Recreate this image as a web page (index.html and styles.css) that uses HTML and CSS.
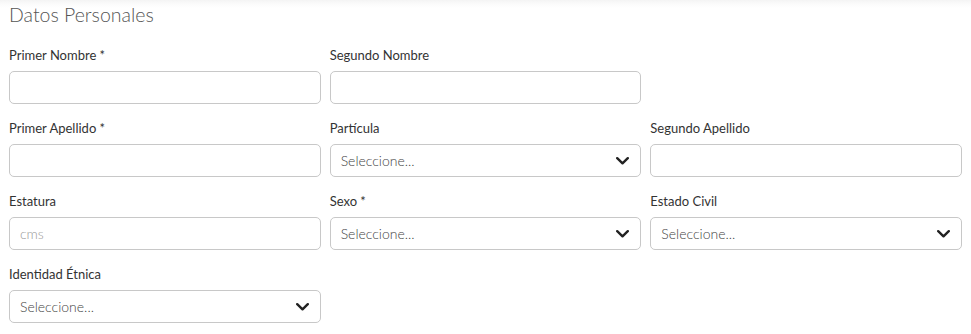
FILE: index.html
```html
<!DOCTYPE html>
<html lang="es">
<head>
<meta charset="utf-8">
<title>Datos Personales</title>
<link rel="stylesheet" href="styles.css">
</head>
<body>
<div class="page">
  <h2 class="title">Datos Personales</h2>
  <div class="grid">
    <div class="field">
      <label class="label">Primer Nombre *</label>
      <div class="input"></div>
    </div>
    <div class="field">
      <label class="label">Segundo Nombre</label>
      <div class="input"></div>
    </div>
    <div class="field empty"></div>

    <div class="field">
      <label class="label">Primer Apellido *</label>
      <div class="input"></div>
    </div>
    <div class="field">
      <label class="label">Partícula</label>
      <div class="input select"><span>Seleccione...</span><svg class="chev" width="13" height="8" viewBox="0 0 13 8"><polyline points="1.2,1.2 6.5,6.3 11.8,1.2" fill="none" stroke="#222" stroke-width="2.4" stroke-linecap="round" stroke-linejoin="round"/></svg></div>
    </div>
    <div class="field">
      <label class="label">Segundo Apellido</label>
      <div class="input"></div>
    </div>

    <div class="field">
      <label class="label">Estatura</label>
      <div class="input"><span class="ph">cms</span></div>
    </div>
    <div class="field">
      <label class="label">Sexo *</label>
      <div class="input select"><span>Seleccione...</span><svg class="chev" width="13" height="8" viewBox="0 0 13 8"><polyline points="1.2,1.2 6.5,6.3 11.8,1.2" fill="none" stroke="#222" stroke-width="2.4" stroke-linecap="round" stroke-linejoin="round"/></svg></div>
    </div>
    <div class="field">
      <label class="label">Estado Civil</label>
      <div class="input select"><span>Seleccione...</span><svg class="chev" width="13" height="8" viewBox="0 0 13 8"><polyline points="1.2,1.2 6.5,6.3 11.8,1.2" fill="none" stroke="#222" stroke-width="2.4" stroke-linecap="round" stroke-linejoin="round"/></svg></div>
    </div>

    <div class="field">
      <label class="label">Identidad Étnica</label>
      <div class="input select"><span>Seleccione...</span><svg class="chev" width="13" height="8" viewBox="0 0 13 8"><polyline points="1.2,1.2 6.5,6.3 11.8,1.2" fill="none" stroke="#222" stroke-width="2.4" stroke-linecap="round" stroke-linejoin="round"/></svg></div>
    </div>
  </div>
</div>
</body>
</html>
```
FILE: styles.css
```css
html, body {
  margin: 0;
  padding: 0;
  background: #fff;
}
body {
  font-family: Lato, "Open Sans", sans-serif;
  color: #333;
  background: linear-gradient(to bottom, #f4f4f4 0, #fbfbfb 4px, #fff 8px);
  min-height: 334px;
}
.page {
  width: 953px;
  padding: 4px 0 0 9px;
}
.title {
  margin: 0 0 21px 0;
  font-size: 19.5px;
  line-height: 22px;
  font-weight: 300;
  color: #555;
}
.grid {
  display: grid;
  grid-template-columns: repeat(3, 1fr);
  column-gap: 9px;
  row-gap: 16px;
}
.field {
  display: flex;
  flex-direction: column;
  gap: 8px;
}
.label {
  font-size: 13px;
  line-height: 16px;
  color: #333;
}
.input {
  box-sizing: border-box;
  height: 33px;
  border: 1px solid #c8c8c8;
  border-radius: 5px;
  background: #fff;
  display: flex;
  align-items: center;
  padding: 0 10px;
  font-size: 14px;
  font-weight: 300;
  color: #444;
}
.ph {
  color: #999;
}
.select {
  justify-content: space-between;
  padding-right: 11px;
}
.chev {
  display: block;
}
```
